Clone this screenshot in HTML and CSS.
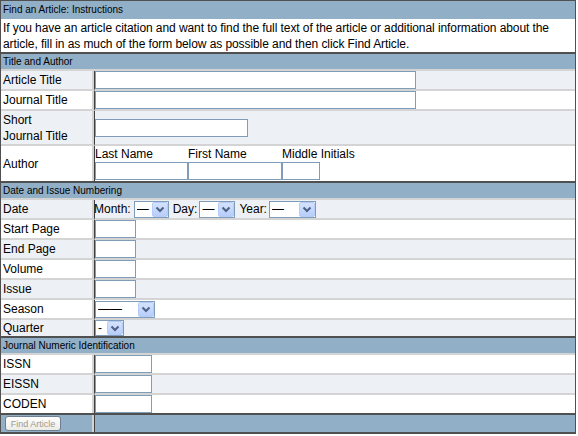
FILE: index.html
```html
<!DOCTYPE html>
<html lang="en">
<head>
  <meta charset="UTF-8" />
  <title>Find an Article</title>
  <link rel="stylesheet" href="styles.css">
</head>
<body>
  <form id="findArticle">
    <table class="finder">
      <tr class="bar first"><th colspan="2">Find an Article: Instructions</th></tr>
      <tr class="intro">
        <td colspan="2">If you have an article citation and want to find the full text of the article or additional information about the article, fill in as much of the form below as possible and then click Find Article.</td>
      </tr>

      <tr class="bar"><th colspan="2">Title and Author</th></tr>
      <tr class="alt">
        <td class="label">Article Title</td>
        <td><input type="text" class="long" name="atitle" /></td>
      </tr>
      <tr>
        <td class="label">Journal Title</td>
        <td><input type="text" class="long" name="title" /></td>
      </tr>
      <tr class="alt short-title">
        <td class="label">Short<br />Journal Title</td>
        <td><input type="text" class="medium" name="stitle" /></td>
      </tr>
      <tr class="author end">
        <td class="label">Author</td>
        <td>
          <div class="names">
            <label class="name last">Last Name<input type="text" name="aulast" /></label>
            <label class="name first">First Name<input type="text" name="aufirst" /></label>
            <label class="name mid">Middle Initials<input type="text" name="auinit" /></label>
          </div>
        </td>
      </tr>

      <tr class="bar"><th colspan="2">Date and Issue Numbering</th></tr>
      <tr class="alt">
        <td class="label">Date</td>
        <td>
          <div class="date">
            <span class="tight">Month:</span>
            <span class="pick month"><select name="month"><option>—</option></select><i class="arrow"><svg viewBox="0 0 14 13"><path d="M3.5 4.5 L7 8 L10.5 4.5" /></svg></i></span>
            <span>Day:</span>
            <span class="pick day"><select name="day"><option>—</option></select><i class="arrow"><svg viewBox="0 0 14 13"><path d="M3.5 4.5 L7 8 L10.5 4.5" /></svg></i></span>
            <span>Year:</span>
            <span class="pick year"><select name="year"><option>—</option></select><i class="arrow"><svg viewBox="0 0 14 13"><path d="M3.5 4.5 L7 8 L10.5 4.5" /></svg></i></span>
          </div>
        </td>
      </tr>
      <tr>
        <td class="label">Start Page</td>
        <td><input type="text" class="short" name="spage" /></td>
      </tr>
      <tr class="alt">
        <td class="label">End Page</td>
        <td><input type="text" class="short" name="epage" /></td>
      </tr>
      <tr>
        <td class="label">Volume</td>
        <td><input type="text" class="short" name="volume" /></td>
      </tr>
      <tr class="alt">
        <td class="label">Issue</td>
        <td><input type="text" class="short" name="issue" /></td>
      </tr>
      <tr>
        <td class="label">Season</td>
        <td>
          <span class="pick season"><select name="ssn"><option>——</option></select><i class="arrow"><svg viewBox="0 0 14 13"><path d="M3.5 4.5 L7 8 L10.5 4.5" /></svg></i></span>
        </td>
      </tr>
      <tr class="alt end quarter-row">
        <td class="label">Quarter</td>
        <td>
          <span class="pick quarter"><select name="quarter"><option>-</option></select><i class="arrow"><svg viewBox="0 0 14 13"><path d="M3.5 4.5 L7 8 L10.5 4.5" /></svg></i></span>
        </td>
      </tr>

      <tr class="bar"><th colspan="2">Journal Numeric Identification</th></tr>
      <tr>
        <td class="label">ISSN</td>
        <td><input type="text" class="code" name="issn" /></td>
      </tr>
      <tr class="alt">
        <td class="label">EISSN</td>
        <td><input type="text" class="code" name="eissn" /></td>
      </tr>
      <tr class="end">
        <td class="label">CODEN</td>
        <td><input type="text" class="code" name="coden" /></td>
      </tr>

      <tr class="footer">
        <td class="label"><button type="submit" disabled>Find Article</button></td>
        <td></td>
      </tr>
    </table>
  </form>
</body>
</html>
```

FILE: styles.css
```css
* {
  box-sizing: border-box;
}

html, body {
  margin: 0;
  padding: 0;
  background: #ffffff;
  color: #000000;
  font-family: 'Liberation Sans', Arial, sans-serif;
  font-size: 12px;
}

form {
  margin: 0;
}

.finder {
  width: 576px;
  border-collapse: separate;
  border-spacing: 0;
  border: 1px solid #505050;
  border-bottom-width: 2px;
}

.finder td,
.finder th {
  padding: 0;
  vertical-align: middle;
}

.finder td {
  height: 20px;
  line-height: 16px;
  border-bottom: 2px solid #d4d4d4;
}

/* section bars */
.bar th {
  background: #91afc7;
  font-weight: normal;
  font-size: 10px;
  line-height: 12px;
  text-align: left;
  height: 17px;
  padding: 0 2px;
  border-bottom: 2px solid #d4d4d4;
}

.bar.first th {
  height: 18px;
  border-bottom: none;
}

.intro td {
  height: 35px;
  padding: 1px 2px 0 2px;
  letter-spacing: -0.08px;
  border-bottom: 2px solid #505050;
}

tr.alt td {
  background: #edf1f5;
}

.finder td.label {
  width: 94px;
  padding-left: 2px;
  border-right: 1px solid #404040;
  box-shadow: inset -2px 0 0 #d4d4d4;
  white-space: nowrap;
}

tr.short-title td {
  height: 35px;
}

tr.author td {
  height: 37px;
}

tr.end td {
  border-bottom-color: #505050;
}

tr.quarter-row td {
  height: 18px;
}

input[type="text"] {
  display: block;
  height: 18px;
  margin: 0;
  padding: 0 2px;
  border: 1px solid #7f9db9;
  background: #ffffff;
  font: inherit;
}

input.long { width: 321px; }
input.medium { width: 153px; }
input.short { width: 41px; }
input.code { width: 57px; }

/* author name parts */
.names {
  display: flex;
}

.name {
  display: flex;
  flex-direction: column;
  line-height: 15px;
  white-space: nowrap;
}

.name.last { width: 93px; }
.name.first { width: 94px; }
.name.mid { width: 38px; }

.name input[type="text"] {
  width: 100%;
  height: 18px;
}

/* date line */
.date {
  display: flex;
  align-items: center;
  gap: 4px;
}

.date .tight {
  margin-left: -1px;
  margin-right: -1px;
}

.date .pick.day,
.date .pick.year {
  margin-left: -2px;
}

/* xp style combo boxes */
.pick {
  position: relative;
  display: block;
  height: 17px;
  border: 1px solid #7f9db9;
  background: #ffffff;
}

.pick select {
  appearance: none;
  -webkit-appearance: none;
  display: block;
  border: none;
  background: transparent;
  width: 100%;
  height: 15px;
  padding: 0 0 0 2px;
  font: inherit;
  line-height: 15px;
  color: #000;
}

.pick .arrow {
  position: absolute;
  top: 0;
  right: 0;
  width: 16px;
  height: 15px;
  border: 1px solid #b6cbf7;
  border-radius: 2px;
  background: linear-gradient(#d4e2fd, #b7cdfb);
}

.pick .arrow svg {
  display: block;
  width: 14px;
  height: 13px;
}

.pick .arrow path {
  fill: none;
  stroke: #4d6185;
  stroke-width: 2;
}

.pick.month { width: 35px; }
.pick.day { width: 36px; }
.pick.year { width: 47px; }
.pick.season { width: 60px; }
.pick.quarter { width: 29px; height: 16px; }
.pick.quarter .arrow { height: 14px; }

tr.footer td {
  background: #91afc7;
  height: 17px;
  border-bottom: none;
}

tr.footer button {
  display: block;
  margin-left: 2px;
  width: 56px;
  height: 15px;
  padding: 0;
  border: 1px solid #6d7f91;
  border-radius: 3px;
  background: linear-gradient(#ffffff, #ecebe6);
  color: #9d9a8c;
  font-family: 'Liberation Sans', Arial, sans-serif;
  font-size: 9px;
}
```
